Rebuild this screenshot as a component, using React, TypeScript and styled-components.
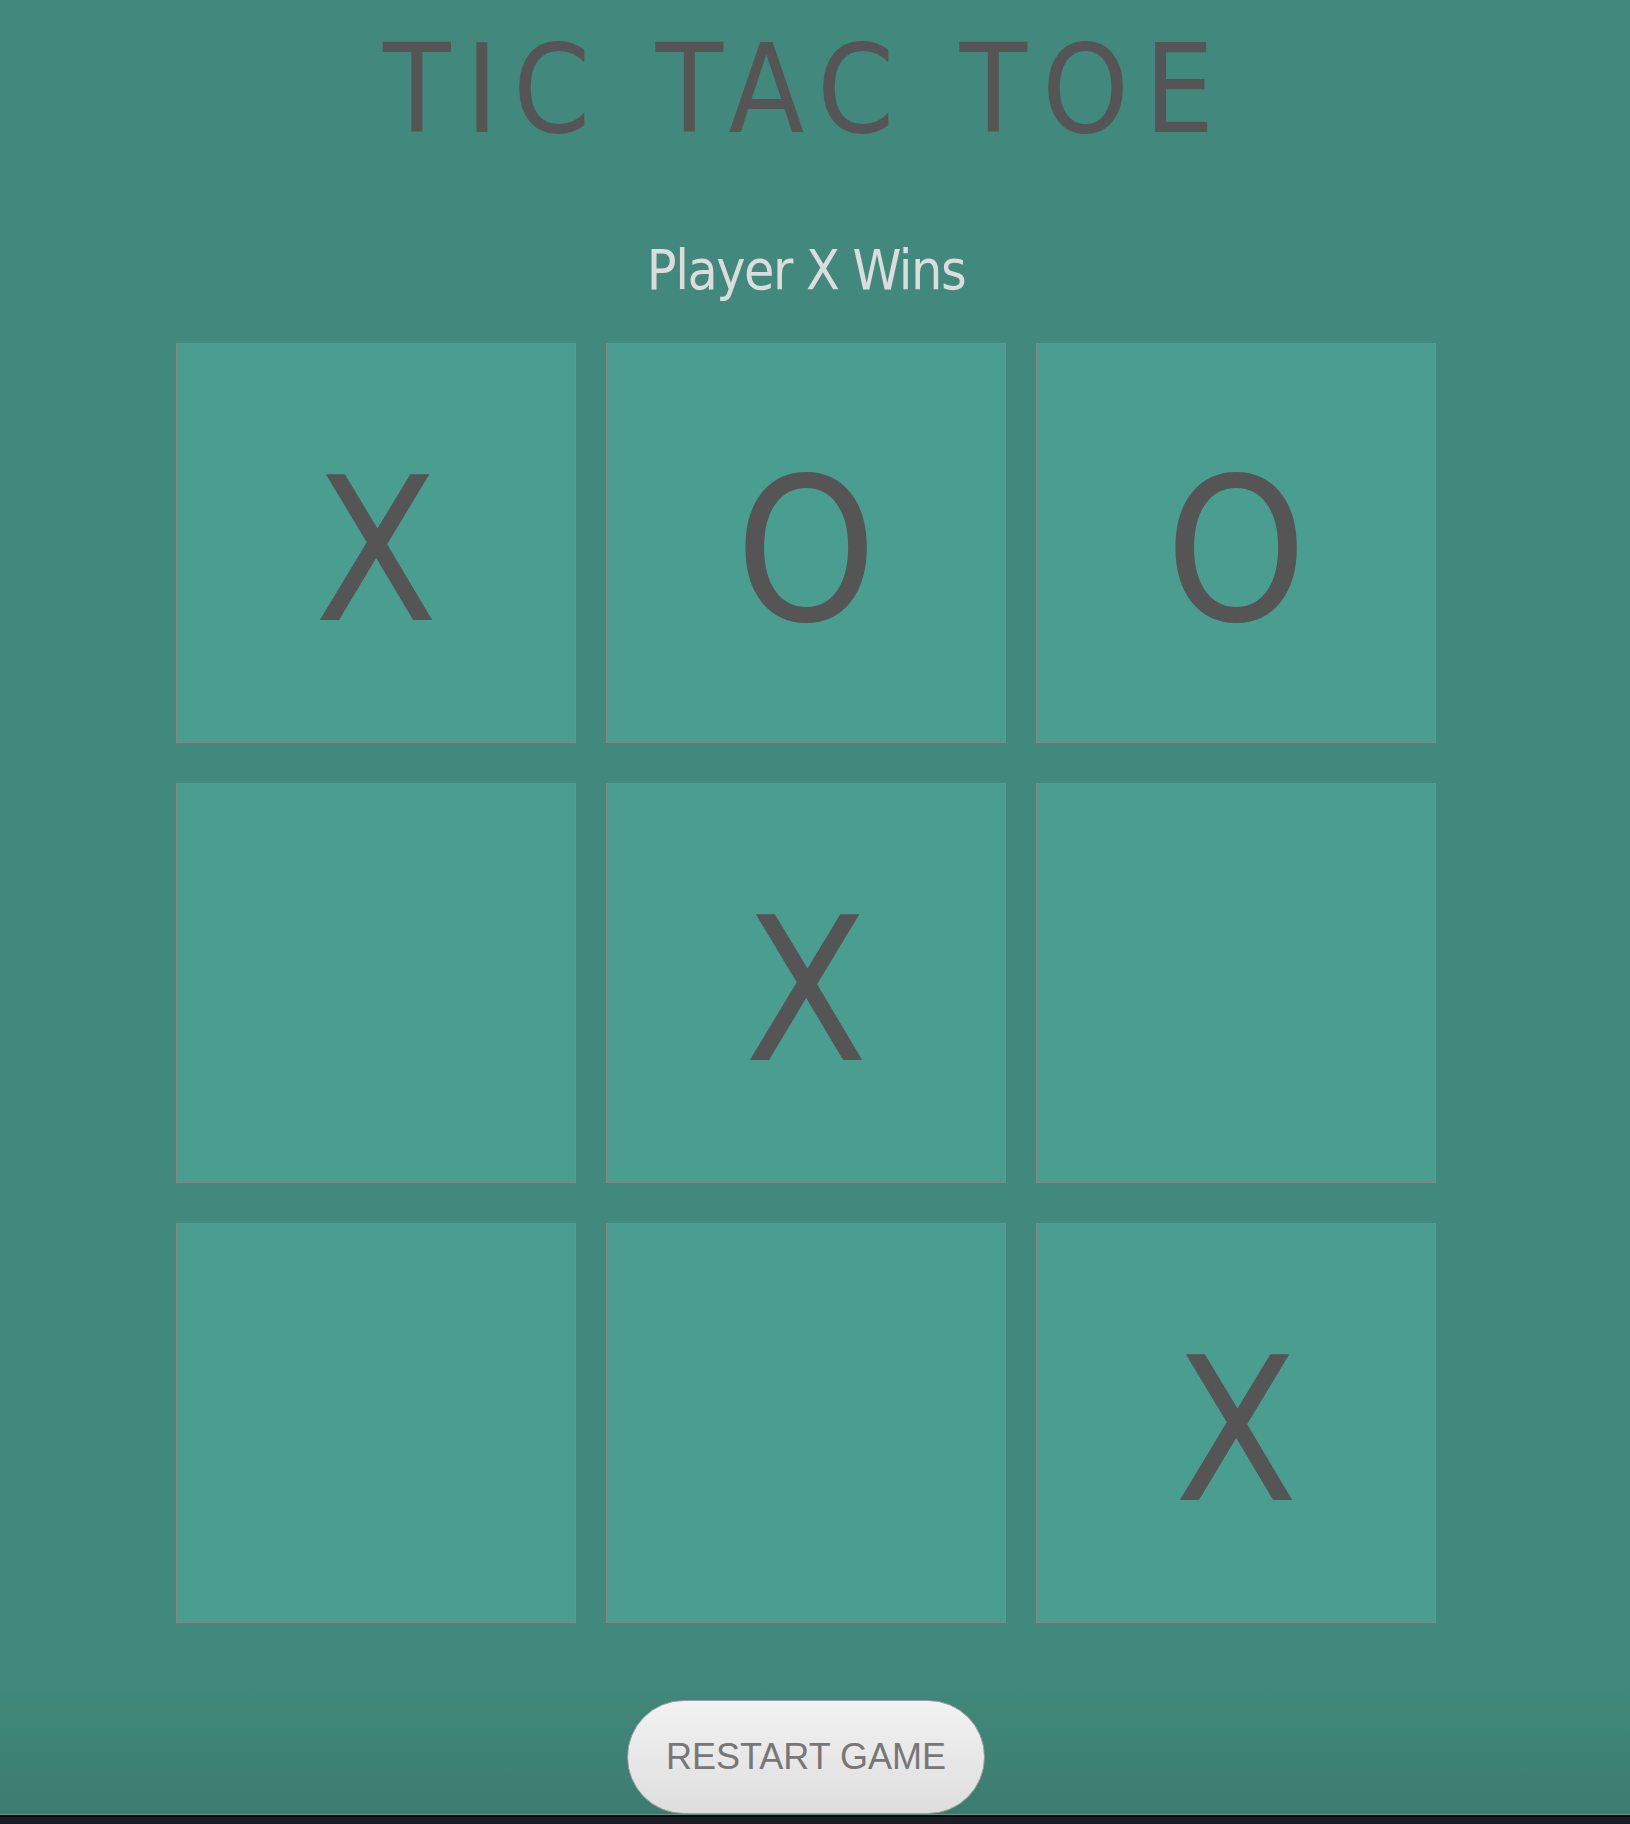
import styled, { createGlobalStyle } from 'styled-components'

const GlobalStyle = createGlobalStyle`
  html, body {
    margin: 0;
    padding: 0;
  }

  body {
    background: #40897c;
    font-family: "Liberation Sans Narrow", "DejaVu Sans Condensed", "Liberation Sans", sans-serif;
  }
`

const narrow = `"Liberation Sans Narrow", "DejaVu Sans Condensed", "Liberation Sans", sans-serif`

const Page = styled.div`
  min-height: 100vh;
  display: flex;
  flex-direction: column;
  background: linear-gradient(to bottom, #40897c 0%, #40897c 92%, #3c7b6f 100%);
`

const Main = styled.main`
  flex: 1;
  display: flex;
  flex-direction: column;
  align-items: center;
  padding-right: 18px;
`

const Title = styled.h1`
  margin: 0;
  padding-top: 28px;
  font-family: ${narrow};
  font-size: 123px;
  font-weight: 400;
  line-height: 1;
  letter-spacing: 15px;
  color: #555555;
`

const Status = styled.p`
  margin: 92px 0 0;
  font-family: ${narrow};
  font-size: 55px;
  line-height: 1;
  letter-spacing: -1.5px;
  color: #dcdcdc;
`

const Board = styled.div`
  margin-top: 45px;
  display: grid;
  grid-template-columns: repeat(3, 400px);
  grid-auto-rows: 400px;
  column-gap: 30px;
  row-gap: 40px;
`

const Cell = styled.div`
  box-sizing: border-box;
  display: flex;
  align-items: center;
  justify-content: center;
  padding-top: 16px;
  background: #4a9e90;
  border: 1px solid #868686;
  font-family: ${narrow};
  font-size: 200px;
  line-height: 1;
  color: #555555;
  cursor: pointer;
`

const RestartButton = styled.button`
  margin-top: 77px;
  width: 358px;
  height: 114px;
  border: 1px solid #9a9a9a;
  border-radius: 58px;
  background: linear-gradient(to bottom, #f2f2f2, #dedede);
  font-family: "Liberation Sans", Arial, sans-serif;
  font-size: 36px;
  color: #777777;
  cursor: pointer;
`

const BottomStrip = styled.div`
  height: 10px;
  background: #1a1d25;
  border-top: 1px solid #5d9a8e;
  box-shadow: inset 0 2px 0 #050607;
`

const board = ['X', 'O', 'O', '', 'X', '', '', '', 'X']

export default function App() {
  return (
    <>
      <GlobalStyle />
      <Page>
        <Main>
          <Title>TIC TAC TOE</Title>
          <Status>Player X Wins</Status>
          <Board>
            {board.map((mark, i) => (
              <Cell key={i}>{mark}</Cell>
            ))}
          </Board>
          <RestartButton>RESTART GAME</RestartButton>
        </Main>
        <BottomStrip />
      </Page>
    </>
  )
}
